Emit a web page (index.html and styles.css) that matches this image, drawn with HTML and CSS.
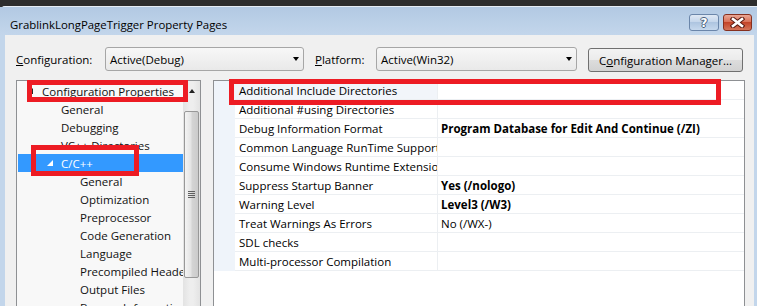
FILE: index.html
```html
<!DOCTYPE html>
<html lang="en">
<head>
    <meta charset="UTF-8">
    <title>GrablinkLongPageTrigger Property Pages</title>
    <link rel="stylesheet" href="styles.css">
</head>
<body>
<div class="screen">
    <div class="window">
        <div class="titlebar">
            <span class="title">GrablinkLongPageTrigger Property Pages</span>
            <div class="caption-buttons">
                <div class="cap help"><span class="help-glyph">?</span></div>
                <div class="cap close">
                    <svg width="15" height="11" viewBox="0 0 15 11">
                        <path d="M3 2 L12 9 M12 2 L3 9" stroke="#5a1a10" stroke-width="4.6" stroke-linecap="square" fill="none"/>
                        <path d="M3 2 L12 9 M12 2 L3 9" stroke="#fff" stroke-width="2.6" stroke-linecap="square" fill="none"/>
                    </svg>
                </div>
            </div>
        </div>

        <div class="dialog">
            <div class="config-row">
                <span class="field-label label-config"><u>C</u>onfiguration:</span>
                <div class="combo combo-config"><span>Active(Debug)</span><span class="combo-arrow"></span></div>
                <span class="field-label label-platform"><u>P</u>latform:</span>
                <div class="combo combo-platform"><span>Active(Win32)</span><span class="combo-arrow"></span></div>
                <div class="push-btn">C<u>o</u>nfiguration Manager...</div>
            </div>

            <div class="panes">
                <div class="tree">
                    <div class="tree-list">
                        <div class="node l0"><span class="twisty"><span class="tri"></span></span>Configuration Properties</div>
                        <div class="node l1"><span class="twisty"></span>General</div>
                        <div class="node l1"><span class="twisty"></span>Debugging</div>
                        <div class="node l1"><span class="twisty"></span>VC++ Directories</div>
                        <div class="node l1 selected"><span class="twisty"><span class="tri"></span></span>C/C++</div>
                        <div class="node l2"><span class="twisty"></span>General</div>
                        <div class="node l2"><span class="twisty"></span>Optimization</div>
                        <div class="node l2"><span class="twisty"></span>Preprocessor</div>
                        <div class="node l2"><span class="twisty"></span>Code Generation</div>
                        <div class="node l2"><span class="twisty"></span>Language</div>
                        <div class="node l2"><span class="twisty"></span>Precompiled Headers</div>
                        <div class="node l2"><span class="twisty"></span>Output Files</div>
                        <div class="node l2"><span class="twisty"></span>Browse Information</div>
                    </div>
                    <div class="vscroll">
                        <div class="sb-up"><span class="sb-arrow"></span></div>
                        <div class="sb-thumb">
                            <div class="grip"><i></i><i></i><i></i><i></i></div>
                        </div>
                    </div>
                </div>

                <div class="grid">
                    <div class="prow active"><div class="gutter"></div><div class="pname">Additional Include Directories</div><div class="pval"></div></div>
                    <div class="prow"><div class="gutter"></div><div class="pname">Additional #using Directories</div><div class="pval"></div></div>
                    <div class="prow"><div class="gutter"></div><div class="pname">Debug Information Format</div><div class="pval bold">Program Database for Edit And Continue (/ZI)</div></div>
                    <div class="prow"><div class="gutter"></div><div class="pname">Common Language RunTime Support</div><div class="pval"></div></div>
                    <div class="prow"><div class="gutter"></div><div class="pname">Consume Windows Runtime Extension</div><div class="pval"></div></div>
                    <div class="prow"><div class="gutter"></div><div class="pname">Suppress Startup Banner</div><div class="pval bold">Yes (/nologo)</div></div>
                    <div class="prow"><div class="gutter"></div><div class="pname">Warning Level</div><div class="pval bold">Level3 (/W3)</div></div>
                    <div class="prow"><div class="gutter"></div><div class="pname">Treat Warnings As Errors</div><div class="pval">No (/WX-)</div></div>
                    <div class="prow"><div class="gutter"></div><div class="pname">SDL checks</div><div class="pval"></div></div>
                    <div class="prow"><div class="gutter"></div><div class="pname">Multi-processor Compilation</div><div class="pval"></div></div>
                </div>
            </div>
        </div>
    </div>

    <!-- red highlight boxes drawn over the screenshot -->
    <div class="mark mark-config"></div>
    <div class="mark mark-cpp"></div>
    <div class="mark mark-include"></div>
</div>
</body>
</html>
```

FILE: styles.css
```css
* {
    box-sizing: border-box;
}
html, body {
    margin: 0;
    padding: 0;
}
body {
    background: #2d2d2d;
    font-family: "Open Sans", "Noto Sans", sans-serif;
    font-size: 11.5px;
    color: #000;
}
.screen {
    position: relative;
    width: 757px;
    height: 306px;
    overflow: hidden;
    padding-top: 6px;
}
.window {
    height: 320px;
    border-top: 1px solid #e6edf5;
    border-top-left-radius: 5px;
    background: #c3d6eb;
    padding: 0 3px 0 5px;
    display: flex;
    flex-direction: column;
}

/* title bar */
.titlebar {
    height: 28px;
    flex: none;
    margin: 0 -3px 0 -5px;
    padding: 0 5px 0 10px;
    background: linear-gradient(#b2c9e3, #c3d6eb);
    display: flex;
    align-items: flex-start;
}
.title {
    margin-top: 10px;
    line-height: 15px;
    font-size: 11.4px;
}
.caption-buttons {
    margin-left: auto;
    margin-top: 7px;
    display: flex;
    gap: 4px;
}
.cap {
    height: 17px;
    border-radius: 3px;
    display: flex;
    align-items: center;
    justify-content: center;
}
.help {
    width: 30px;
    border: 1px solid #6b86aa;
    background: linear-gradient(#dfe8f4, #c2d4ea 50%, #aec5e0 50%, #c6d8ed);
}
.help-glyph {
    font-family: "DejaVu Sans", sans-serif;
    font-weight: bold;
    font-size: 12px;
    line-height: 12px;
    color: #fff;
    text-shadow: 1px 0 0 #4a5f7c, -1px 0 0 #4a5f7c, 0 1px 0 #4a5f7c, 0 -1px 0 #4a5f7c;
}
.close {
    width: 29px;
    border: 1px solid #86301f;
    background: linear-gradient(#eaa795, #d86c52 50%, #c44428 50%, #d4755a);
}

/* dialog body */
.dialog {
    flex: 1;
    background: #f0f0f0;
    padding: 12px 9px 0 11px;
}
.config-row {
    display: flex;
    align-items: center;
    height: 24px;
}
.field-label {
    flex: none;
}
.label-config {
    width: 89px;
}
.label-platform {
    width: 61px;
    margin-left: 11px;
}
.combo {
    height: 24px;
    border: 1px solid #a6a6a6;
    border-radius: 3px;
    background: linear-gradient(#f7f7f7, #e9e9e9);
    display: flex;
    align-items: center;
    padding-left: 4px;
}
.combo-config {
    width: 199px;
}
.combo-platform {
    width: 201px;
}
.combo-arrow {
    margin-left: auto;
    margin-right: 4px;
    width: 0;
    height: 0;
    border-left: 3.5px solid transparent;
    border-right: 3.5px solid transparent;
    border-top: 4px solid #000;
}
.push-btn {
    width: 155px;
    height: 24px;
    margin-left: 11px;
    margin-top: 2px;
    border: 1px solid #707070;
    border-radius: 3px;
    background: linear-gradient(#f3f3f3, #ebebeb 50%, #dddddd 50%, #d2d2d2);
    display: flex;
    align-items: center;
    justify-content: center;
}

/* panes */
.panes {
    margin-top: 9px;
    display: flex;
    gap: 12px;
    height: 260px;
}

/* tree */
.tree {
    width: 185px;
    border: 1px solid #8e9093;
    background: #f8f8f8;
    display: flex;
}
.tree-list {
    flex: 1;
    overflow: hidden;
    padding-top: 1px;
}
.node {
    height: 18px;
    margin-left: 1px;
    display: flex;
    align-items: center;
    white-space: nowrap;
    color: #111;
}
.node.l0 {
    padding-left: 8px;
}
.node.l1 {
    padding-left: 27px;
}
.node.l2 {
    padding-left: 46px;
}
.twisty {
    width: 16px;
    flex: none;
    display: flex;
    align-items: center;
    padding-left: 1px;
}
.tri {
    width: 0;
    height: 0;
    border-left: 6px solid transparent;
    border-bottom: 6px solid #262626;
}
.node.selected {
    background: #3399ff;
    color: #fff;
}
.node.selected .twisty {
    padding-left: 2px;
}
.node.selected .tri {
    border-bottom-color: #fff;
}

.vscroll {
    width: 17px;
    flex: none;
    background: linear-gradient(90deg, #e3e3e3, #eeeeee 40%, #eeeeee 60%, #e3e3e3);
}
.sb-up {
    height: 17px;
    display: flex;
    justify-content: center;
    padding-top: 8px;
}
.sb-arrow {
    width: 0;
    height: 0;
    border-left: 3.5px solid transparent;
    border-right: 3.5px solid transparent;
    border-bottom: 4px solid #222;
}
.sb-thumb {
    margin: 13px 1px 0 1px;
    height: 167px;
    border: 1px solid #989898;
    border-radius: 2px;
    background: linear-gradient(90deg, #f4f4f4, #e4e4e4 45%, #d4d4d4 55%, #cbcbcb);
    display: flex;
    align-items: center;
    justify-content: center;
}
.grip {
    display: flex;
    flex-direction: column;
    gap: 1px;
}
.grip i {
    display: block;
    width: 7px;
    height: 1px;
    background: #606060;
}

/* property grid */
.grid {
    width: 532px;
    border: 1px solid #8e9093;
    background: #fff;
}
.prow {
    display: grid;
    grid-template-columns: 21px 203px 1fr;
    height: 19px;
}
.gutter {
    background: #eff4fa;
}
.pname, .pval {
    border-bottom: 1px solid #eceff2;
    padding-top: 1px;
    display: flex;
    align-items: center;
    white-space: nowrap;
    overflow: hidden;
}
.pname {
    padding-left: 4px;
    border-right: 1px solid #eceff2;
}
.pval {
    padding-left: 3px;
}
.prow.active .pname {
    background: #f2f5fa;
}
.bold {
    font-weight: bold;
}

/* red annotation boxes */
.mark {
    position: absolute;
    border: 5px solid #ed1c24;
}
.mark-config {
    left: 27px;
    top: 80px;
    width: 161px;
    height: 22px;
}
.mark-cpp {
    left: 31px;
    top: 145px;
    width: 108px;
    height: 31px;
}
.mark-include {
    left: 229px;
    top: 79px;
    width: 492px;
    height: 26px;
}
```
